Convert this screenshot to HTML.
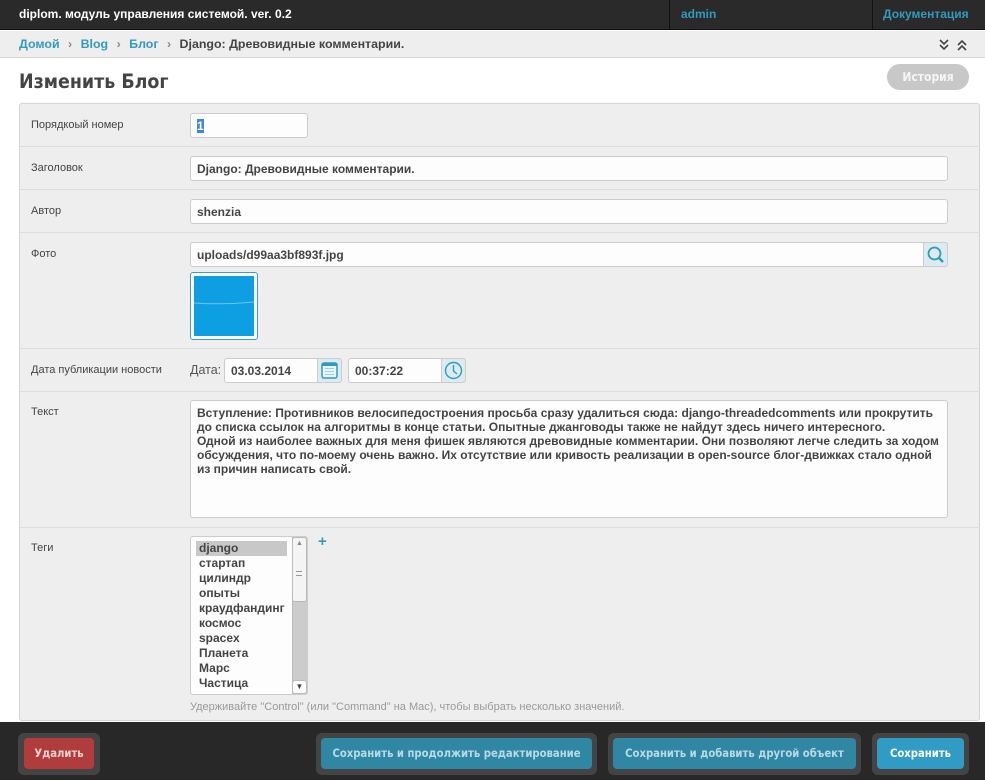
<!DOCTYPE html>
<html><head><meta charset="utf-8">
<style>
*{box-sizing:border-box;margin:0;padding:0}
body{width:985px;height:780px;overflow:hidden;background:#fff;font-family:"Liberation Sans",sans-serif;position:relative;color:#444}
.a{position:absolute}
#hd{left:0;top:0;width:985px;height:30px;background:#2a2a2a;border-bottom:1px solid #111}
.hf{font-family:"Liberation Sans",sans-serif;font-weight:bold;font-size:12px;white-space:nowrap}
#bc{left:0;top:31px;width:985px;height:27px;background:#eee;border-bottom:1px solid #d4d4d4}
.lbl{font-size:11px;color:#444;left:31px}
.inp{background:#fdfdfd;border:1px solid #ccc;border-radius:3px;height:25px;font-size:12px;font-weight:bold;color:#444;padding:5px 6px;line-height:14px}
.row{left:20px;width:958px;border-top:1px solid #ddd}
.btnf{background:#444;border-radius:6px}
.btn{border-radius:4px;font-size:11.2px;font-weight:bold;text-align:center;line-height:31px;font-family:"DejaVu Sans Condensed","DejaVu Sans",sans-serif;font-stretch:condensed;white-space:nowrap;overflow:hidden}
.tag{font-size:12px;font-weight:bold;line-height:15px;color:#444;padding-left:3px}
</style></head><body>
<div class="a" id="hd"></div>
<div class="a hf" style="left:19px;top:7px;color:#fff">diplom. модуль управления системой. ver. 0.2</div>
<div class="a" style="left:669px;top:0;width:1px;height:30px;background:#111"></div>
<div class="a" style="left:872px;top:0;width:1px;height:30px;background:#111"></div>
<div class="a hf" style="left:681px;top:7px;color:#309bbf">admin</div>
<div class="a hf" style="left:883px;top:7px;color:#309bbf">Документация</div>

<div class="a" id="bc"></div>
<div class="a hf" style="left:19px;top:37px;color:#309bbf;font-size:12.4px">Домой <span style="color:#888;margin:0 5px">›</span> Blog <span style="color:#888;margin:0 5px">›</span> Блог <span style="color:#888;margin:0 5px">›</span> <span style="color:#444">Django: Древовидные комментарии.</span></div>
<svg class="a" style="left:938px;top:38px" width="32" height="14"><g fill="none" stroke="#444" stroke-width="1.6"><path d="M2 2l4 4 4-4M2 7l4 4 4-4"/><path d="M20 7l4-4 4 4M20 12l4-4 4 4"/></g></svg>

<div class="a" style="left:19px;top:70px;font-size:19.4px;font-weight:bold;font-family:'DejaVu Sans Condensed','DejaVu Sans',sans-serif;font-stretch:condensed;color:#444">Изменить Блог</div>
<div class="a" style="left:887px;top:64px;width:82px;height:26px;border-radius:13px;background:#c8c8c8;color:#f5f5f5;font-size:12px;font-weight:bold;text-align:center;line-height:26px;font-family:'DejaVu Sans Condensed','DejaVu Sans',sans-serif;font-stretch:condensed">История</div>

<div class="a" style="left:19px;top:103px;width:961px;height:618px;background:#eee;border:1px solid #d4d4d4;border-radius:3px"></div>

<div class="a lbl" style="top:119px">Порядкоый номер</div>
<div class="a inp" style="left:190px;top:113px;width:118px;height:25px"><span style="background:#3a87e6;color:#fff">1</span></div>

<div class="a row" style="top:146px"></div>
<div class="a lbl" style="top:162px">Заголовок</div>
<div class="a inp" style="left:190px;top:156px;width:758px">Django: Древовидные комментарии.</div>

<div class="a row" style="top:189px"></div>
<div class="a lbl" style="top:205px">Автор</div>
<div class="a inp" style="left:190px;top:199px;width:758px">shenzia</div>

<div class="a row" style="top:232px"></div>
<div class="a lbl" style="top:248px">Фото</div>
<div class="a inp" style="left:190px;top:242px;width:758px">uploads/d99aa3bf893f.jpg</div>
<div class="a" style="left:923px;top:242px;width:25px;height:25px;background:#dcebef;border:1px solid #ccc;border-radius:0 3px 3px 0"></div>
<svg class="a" style="left:926px;top:245px" width="20" height="20"><circle cx="8.5" cy="8.5" r="6" fill="none" stroke="#309bbf" stroke-width="1.8"/><path d="M13 13l4 4" stroke="#309bbf" stroke-width="2.5"/></svg>
<div class="a" style="left:190px;top:272px;width:68px;height:68px;border:1px solid #3a9ec4;border-radius:3px;background:#fff"></div>
<div class="a" style="left:194px;top:276px;width:60px;height:60px;background:#0e9fe3"></div>
<svg class="a" style="left:194px;top:300px" width="60" height="6"><path d="M0 3Q30 5 60 2" stroke="#6cc6ee" stroke-width="1" fill="none"/></svg>

<div class="a row" style="top:348px"></div>
<div class="a lbl" style="top:364px">Дата публикации новости</div>
<div class="a" style="left:190px;top:363px;font-size:12.5px;color:#555">Дата:</div>
<div class="a inp" style="left:224px;top:358px;width:95px">03.03.2014</div>
<div class="a" style="left:317px;top:358px;width:25px;height:25px;background:#dcebef;border:1px solid #ccc;border-radius:0 3px 3px 0"></div>
<svg class="a" style="left:320px;top:361px" width="19" height="19"><rect x="2" y="2" width="15" height="15" rx="2" fill="#e8f4f8" stroke="#309bbf" stroke-width="1.5"/><rect x="2" y="2" width="15" height="3" fill="#309bbf"/><g fill="#9fcfe0"><rect x="5" y="7" width="9" height="1"/><rect x="5" y="10" width="9" height="1"/><rect x="5" y="13" width="9" height="1"/></g></svg>
<div class="a inp" style="left:348px;top:358px;width:95px">00:37:22</div>
<div class="a" style="left:441px;top:358px;width:25px;height:25px;background:#dcebef;border:1px solid #ccc;border-radius:0 3px 3px 0"></div>
<svg class="a" style="left:444px;top:361px" width="19" height="19"><circle cx="9.5" cy="9.5" r="8" fill="none" stroke="#309bbf" stroke-width="1.4"/><path d="M9.5 4v6l3.5 3" fill="none" stroke="#309bbf" stroke-width="1.4"/></svg>

<div class="a row" style="top:391px"></div>
<div class="a lbl" style="top:406px">Текст</div>
<div class="a inp" style="left:190px;top:400px;width:758px;height:118px;padding:5px 6px;line-height:14px;font-size:12px">Вступление: Противников велосипедостроения просьба сразу удалиться сюда: django-threadedcomments или прокрутить до списка ссылок на алгоритмы в конце статьи. Опытные джанговоды также не найдут здесь ничего интересного.<br>Одной из наиболее важных для меня фишек являются древовидные комментарии. Они позволяют легче следить за ходом обсуждения, что по-моему очень важно. Их отсутствие или кривость реализации в open-source блог-движках стало одной из причин написать свой.</div>

<div class="a row" style="top:527px"></div>
<div class="a lbl" style="top:542px">Теги</div>
<div class="a" style="left:190px;top:536px;width:118px;height:159px;background:#fdfdfd;border:1px solid #ccc;border-radius:3px;padding:4px 0 0 5px">
<div class="tag" style="background:#c8c8c8;width:91px">django</div>
<div class="tag">стартап</div><div class="tag">цилиндр</div><div class="tag">опыты</div><div class="tag">краудфандинг</div><div class="tag">космос</div><div class="tag">spacex</div><div class="tag">Планета</div><div class="tag">Марс</div><div class="tag">Частица</div>
</div>
<div class="a" style="left:292px;top:537px;width:15px;height:157px;background:#ccc;border-left:1px solid #bbb"></div>
<div class="a" style="left:292px;top:537px;width:15px;height:65px;background:#f4f4f4;border:1px solid #bbb;border-radius:3px"></div>
<div class="a" style="left:292px;top:680px;width:15px;height:14px;background:#fff;border:1px solid #bbb;border-radius:3px;font-size:8px;text-align:center;line-height:12px">▼</div>
<div class="a" style="left:296px;top:540px;font-size:7px;color:#888">▲</div>
<div class="a" style="left:296px;top:571px;width:6px;height:5px;border-top:1px solid #999;border-bottom:1px solid #999"></div>
<div class="a" style="left:318px;top:533px;color:#309bbf;font-size:15px;font-weight:bold">+</div>
<div class="a" style="left:190px;top:701px;font-size:11px;color:#999">Удерживайте "Control" (или "Command" на Mac), чтобы выбрать несколько значений.</div>

<div class="a" style="left:0;top:722px;width:985px;height:58px;background:#282828"></div>
<div class="a btnf" style="left:18px;top:733px;width:82px;height:42px"></div>
<div class="a btn" style="left:24px;top:738px;width:70px;background:#b03c3c;color:#f0d0d0">Удалить</div>
<div class="a btnf" style="left:316px;top:733px;width:281px;height:42px"></div>
<div class="a btn" style="left:321px;top:738px;width:271px;background:#2f87a3;color:#b9d9e4">Сохранить и продолжить редактирование</div>
<div class="a btnf" style="left:608px;top:733px;width:253px;height:42px"></div>
<div class="a btn" style="left:613px;top:738px;width:243px;background:#2f87a3;color:#b9d9e4">Сохранить и добавить другой объект</div>
<div class="a btnf" style="left:872px;top:733px;width:97px;height:42px"></div>
<div class="a btn" style="left:877px;top:738px;width:87px;background:#309bc5;color:#fff">Сохранить</div>
</body></html>
